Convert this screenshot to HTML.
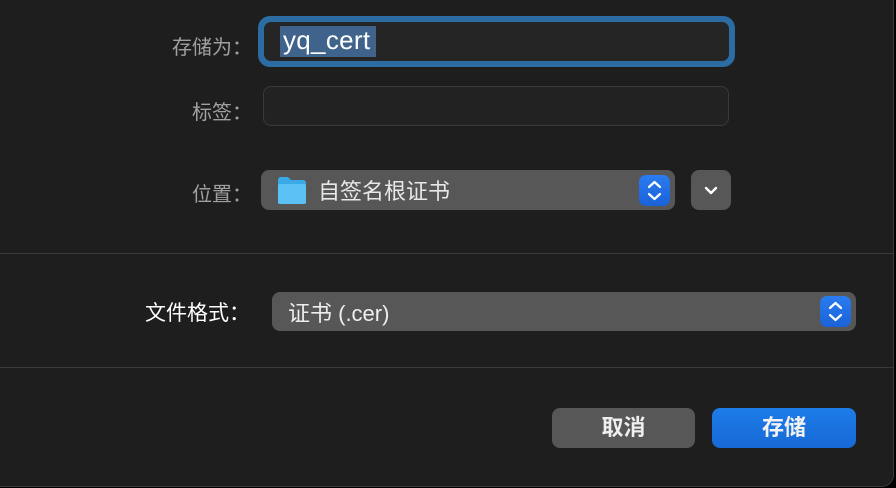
<!DOCTYPE html>
<html><head><meta charset="utf-8"><style>
*{margin:0;padding:0;box-sizing:border-box}
body{width:896px;height:488px;background:#000;overflow:hidden;font-family:"Liberation Sans","Noto Sans CJK SC",sans-serif}
.win{position:absolute;left:0;top:0;width:894px;height:487px;background:#1e1e1e;border:1px solid #3a3a3a;border-top:none;border-left:none;border-radius:0 0 12px 0}
.abs{position:absolute}
.lbl{position:absolute;color:#a0a0a0;font-size:20px;text-align:right}
.sep{position:absolute;left:0;width:894px;height:1px;background:#3a3a3a}
.step{position:absolute;width:31px;height:31px;border-radius:7px;background:linear-gradient(#2a7cf0,#1a62d8);}
.btn{position:absolute;height:40px;border-radius:8px;color:#eee;font-size:22px;text-align:center;line-height:40px;font-weight:bold}
</style></head><body><div class="win">
<div class="lbl" style="left:140px;top:31px;width:112px">存储为：</div>
<div class="abs" style="left:258px;top:16px;width:477px;height:51px;border-radius:12px;background:#2b6da3"></div>
<div class="abs" style="left:264px;top:22px;width:465px;height:39px;border-radius:7px;background:#252525"></div>
<div class="abs" style="left:280px;top:26px;width:96px;height:31px;background:#3f638b"></div>
<div class="abs" style="left:283px;top:25px;color:#fff;font-size:26px;letter-spacing:0.3px">yq_cert</div>
<div class="lbl" style="left:140px;top:96px;width:112px">标签：</div>
<div class="abs" style="left:263px;top:86px;width:466px;height:40px;border-radius:8px;background:#222;border:1px solid #3a3a3a"></div>
<div class="lbl" style="left:140px;top:178px;width:112px">位置：</div>
<div class="abs" style="left:261px;top:170px;width:414px;height:40px;border-radius:8px;background:#575757"></div>
<svg class="abs" style="left:277px;top:176px" width="30" height="29"><path d="M1 4q0-3 3-3h7l3 3h12q3 0 3 3v19q0 2-2 2H3q-2 0-2-2z" fill="#3ba8e8"/><rect x="1" y="8" width="28" height="20" rx="2" fill="#5cc2f5"/></svg>
<div class="abs" style="left:318px;top:174px;color:#e8e8e8;font-size:22px">自签名根证书</div>
<div class="step" style="left:639px;top:175px"><svg width="31" height="31"><path d="M10 12l5.5-5 5.5 5M10 19l5.5 5 5.5-5" stroke="#fff" stroke-width="2.2" fill="none" stroke-linecap="round" stroke-linejoin="round"/></svg></div>
<div class="abs" style="left:691px;top:170px;width:40px;height:40px;border-radius:8px;background:#575757"><svg width="40" height="40"><path d="M15 18l5 5 5-5" stroke="#fff" stroke-width="2.4" fill="none" stroke-linecap="round" stroke-linejoin="round"/></svg></div>
<div class="sep" style="top:253px"></div>
<div class="abs" style="left:145px;top:297px;color:#fff;font-size:21px">文件格式：</div>
<div class="abs" style="left:272px;top:292px;width:584px;height:39px;border-radius:8px;background:#575757"></div>
<div class="abs" style="left:288px;top:296px;color:#eee;font-size:22px">证书 (.cer)</div>
<div class="step" style="left:820px;top:296px"><svg width="31" height="31"><path d="M10 12l5.5-5 5.5 5M10 19l5.5 5 5.5-5" stroke="#fff" stroke-width="2.2" fill="none" stroke-linecap="round" stroke-linejoin="round"/></svg></div>
<div class="sep" style="top:367px"></div>
<div class="btn" style="left:552px;top:408px;width:143px;background:#575757">取消</div>
<div class="btn" style="left:712px;top:408px;width:144px;background:linear-gradient(#1d7ce8,#1769d6);color:#f2f2f2">存储</div>
</div></body></html>
